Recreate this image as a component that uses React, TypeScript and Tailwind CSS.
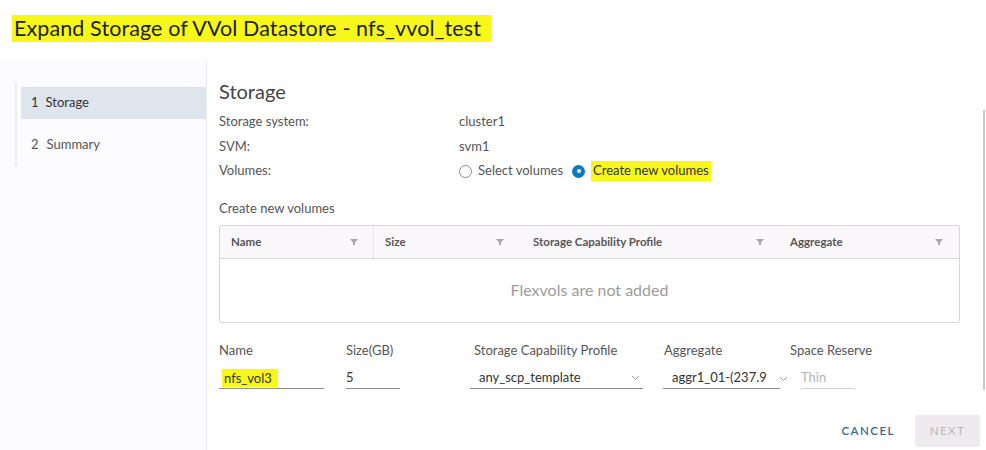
import React from "react";

const font = { fontFamily: "Lato, 'Noto Sans', sans-serif" };

function FilterIcon() {
  return (
    <svg width="8" height="8" viewBox="0 0 8 8" className="fill-[#a8a8a8] shrink-0">
      <path d="M0 1h8L5 4.5V7H3V4.5z" />
    </svg>
  );
}

function Chevron() {
  return (
    <svg width="9" height="6" viewBox="0 0 9 6" className="stroke-[#9a9a9a] fill-none">
      <path d="M1 1l3.5 3.5L8 1" strokeWidth="1" />
    </svg>
  );
}

export default function App() {
  const columns = [
    { label: "Name", cls: "w-[154px] pr-[15px] border-r border-[#e4e4e4]" },
    { label: "Size", cls: "w-[148px] pr-[18px]" },
    { label: "Storage Capability Profile", cls: "w-[257px] pr-[15px]" },
    { label: "Aggregate", cls: "flex-1 pr-[16px]" },
  ];

  return (
    <div className="w-[986px] h-[450px] overflow-hidden bg-white text-[#565656] flex flex-col" style={font}>
      {/* Title */}
      <div className="h-[60px] pl-[12px] pt-[15px]">
        <span className="inline-block bg-[#f7f71a] px-[2px] h-[27px] leading-[27px] text-[21.5px] text-[#1d1d1d] tracking-[0.1px] pr-[10px]">
          Expand Storage of VVol Datastore - nfs_vvol_test
        </span>
      </div>

      <div className="flex flex-1 min-h-0">
        {/* Sidebar */}
        <div className="w-[207px] shrink-0 border-r border-[#e8e8e8] bg-[#fcfbfd] pt-[22px] pl-[15px]">
          <div className="border-l-[2px] border-[#ececec] pt-[5px] pb-[6px] pl-[4px]">
            <div className="h-[32px] bg-[#dfe5ec] flex items-center pl-[10px] text-[13px] text-[#333]">
              <span>1</span>
              <span className="ml-[7px]">Storage</span>
            </div>
            <div className="h-[32px] mt-[10px] flex items-center pl-[10px] text-[13px] text-[#565656]">
              <span>2</span>
              <span className="ml-[8px]">Summary</span>
            </div>
          </div>
        </div>

        {/* Content */}
        <div className="flex-1 relative pl-[12px] pt-[19px] pr-[26px]">
          <div className="absolute right-[1px] top-[50px] h-[280px] w-[2px] bg-[#c8c8c8]" />
          <h2 className="text-[20px] leading-[24px] text-[#444]">Storage</h2>

          <div className="mt-[10px] text-[13px] flex flex-col gap-[6.5px]">
            <div className="flex h-[18px] items-center">
              <span className="w-[240px]">Storage system:</span>
              <span>cluster1</span>
            </div>
            <div className="flex h-[18px] items-center">
              <span className="w-[240px]">SVM:</span>
              <span>svm1</span>
            </div>
            <div className="flex h-[18px] items-center">
              <span className="w-[240px]">Volumes:</span>
              <span className="flex items-center">
                <span className="w-[13px] h-[13px] rounded-full border border-[#8c8c8c] bg-white" />
                <span className="ml-[6px]">Select volumes</span>
                <span className="ml-[9px] w-[13px] h-[13px] rounded-full bg-[#0a7bc2] flex items-center justify-center">
                  <span className="w-[4px] h-[4px] rounded-full bg-white" />
                </span>
                <span className="ml-[6px] bg-[#f7f71a] px-[2px] text-[#333]">Create new volumes</span>
              </span>
            </div>
          </div>

          <div className="mt-[19px] text-[13px]">Create new volumes</div>

          {/* Table */}
          <div className="mt-[6px] w-[741px] h-[98px] border border-[#d7d7d7] rounded-[2px] flex flex-col">
            <div className="h-[33px] bg-[#fbf8fc] border-b border-[#d7d7d7] flex items-center text-[11.5px] font-bold text-[#565656]">
              {columns.map((c) => (
                <div key={c.label} className={`${c.cls} h-full flex items-center pl-[11px]`}>
                  <span className="flex-1 whitespace-nowrap">{c.label}</span>
                  <FilterIcon />
                </div>
              ))}
            </div>
            <div className="flex-1 flex items-center justify-center text-[16px] text-[#9c9c9c]">
              Flexvols are not added
            </div>
          </div>

          {/* Form */}
          <div className="mt-[18px] flex text-[13px]">
            <div className="w-[127px] shrink-0">
              <div className="h-[16px]">Name</div>
              <div className="mt-[12px] w-[105px] h-[20px] border-b border-[#8c8c8c] flex items-center">
                <span className="ml-[3px] bg-[#f7f71a] pl-[2px] pr-[6px] text-[#333] leading-[18px]">nfs_vol3</span>
              </div>
            </div>
            <div className="w-[127px] shrink-0">
              <div className="h-[16px]">Size(GB)</div>
              <div className="mt-[12px] w-[54px] h-[20px] border-b border-[#8c8c8c] flex items-center text-[#333]">5</div>
            </div>
            <div className="w-[190px] shrink-0">
              <div className="h-[16px] pl-[1px]">Storage Capability Profile</div>
              <div className="mt-[12px] ml-[-3px] w-[173px] h-[20px] border-b border-[#8c8c8c] flex items-center pl-[9px] pr-[3px] text-[#333]">
                <span className="flex-1">any_scp_template</span>
                <Chevron />
              </div>
            </div>
            <div className="w-[127px] shrink-0">
              <div className="h-[16px] pl-[1px]">Aggregate</div>
              <div className="mt-[12px] w-[117px] h-[20px] border-b border-[#8c8c8c] flex items-center pl-[9px] text-[#333] relative">
                <span className="whitespace-nowrap overflow-hidden">aggr1_01-(237.9</span>
                <span className="absolute right-[-8px] top-[7px]"><Chevron /></span>
              </div>
            </div>
            <div>
              <div className="h-[16px]">Space Reserve</div>
              <div className="mt-[12px] ml-[11px] w-[54px] h-[20px] border-b border-[#d0d0d0] flex items-center text-[#b4b4b4]">Thin</div>
            </div>
          </div>

          {/* Buttons */}
          <div className="mt-[26px] flex justify-end items-center mr-[-20px]">
            <button className="text-[11.5px] tracking-[1.5px] text-[#336b92] font-semibold px-[2px]">CANCEL</button>
            <button className="ml-[18px] w-[65px] h-[32px] bg-[#eeeaf0] rounded-[3px] text-[11.5px] tracking-[1.5px] text-[#b9b9b9]">NEXT</button>
          </div>
        </div>
      </div>
    </div>
  );
}
